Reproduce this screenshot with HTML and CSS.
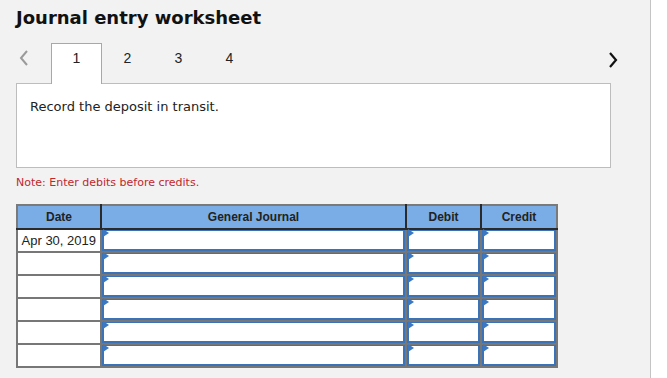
FILE: index.html
```html
<!DOCTYPE html>
<html lang="en">
<head>
    <meta charset="UTF-8">
    <meta name="viewport" content="width=device-width, initial-scale=1.0">
    <title>Journal entry worksheet</title>
    <link rel="stylesheet" href="styles.css">
</head>
<body>
    <div class="panel">
        <h1>Journal entry worksheet</h1>

        <div class="tabs">
            <div class="nav prev">
                <svg width="10" height="16" viewBox="0 0 10 16"><polyline points="8,1 2,8 8,15" fill="none" stroke="#9a9a9a" stroke-width="2"/></svg>
            </div>
            <div class="tab active">1</div>
            <div class="tab">2</div>
            <div class="tab">3</div>
            <div class="tab">4</div>
            <div class="spacer"></div>
            <div class="nav next">
                <svg width="10" height="16" viewBox="0 0 10 16"><polyline points="2,1 8,8 2,15" fill="none" stroke="#111" stroke-width="2.2"/></svg>
            </div>
        </div>

        <div class="question">
            <p>Record the deposit in transit.</p>
        </div>

        <p class="note">Note: Enter debits before credits.</p>

        <table class="journal">
            <colgroup>
                <col class="c-date">
                <col class="c-gj">
                <col class="c-debit">
                <col class="c-credit">
            </colgroup>
            <thead>
                <tr>
                    <th>Date</th>
                    <th>General Journal</th>
                    <th>Debit</th>
                    <th>Credit</th>
                </tr>
            </thead>
            <tbody>
                <tr>
                    <td class="date">Apr 30, 2019</td>
                    <td><div class="entry"></div></td>
                    <td><div class="entry"></div></td>
                    <td><div class="entry"></div></td>
                </tr>
                <tr>
                    <td class="date"></td>
                    <td><div class="entry"></div></td>
                    <td><div class="entry"></div></td>
                    <td><div class="entry"></div></td>
                </tr>
                <tr>
                    <td class="date"></td>
                    <td><div class="entry"></div></td>
                    <td><div class="entry"></div></td>
                    <td><div class="entry"></div></td>
                </tr>
                <tr>
                    <td class="date"></td>
                    <td><div class="entry"></div></td>
                    <td><div class="entry"></div></td>
                    <td><div class="entry"></div></td>
                </tr>
                <tr>
                    <td class="date"></td>
                    <td><div class="entry"></div></td>
                    <td><div class="entry"></div></td>
                    <td><div class="entry"></div></td>
                </tr>
                <tr>
                    <td class="date"></td>
                    <td><div class="entry"></div></td>
                    <td><div class="entry"></div></td>
                    <td><div class="entry"></div></td>
                </tr>
            </tbody>
        </table>
    </div>
</body>
</html>
```

FILE: styles.css
```css
html, body {
    margin: 0;
    padding: 0;
    background-color: white;
}
body {
    font-family: 'DejaVu Sans', Verdana, sans-serif;
    color: #222;
}
.panel {
    width: 651px;
    height: 378px;
    background-color: #f2f2f2;
    border-right: 1px solid #c4c4c4;
    padding: 0 0 0 16px;
    box-sizing: border-box;
    overflow: hidden;
}
h1 {
    margin: 0;
    padding-top: 6px;
    font-size: 18px;
    font-weight: bold;
    color: #111;
    line-height: 23px;
}
.tabs {
    display: flex;
    align-items: stretch;
    width: 604px;
    height: 40px;
    margin-top: 14px;
}
.nav {
    display: flex;
    align-items: center;
    padding-bottom: 10px;
}
.prev {
    width: 35px;
    padding-left: 3px;
    box-sizing: border-box;
}
.next {
    width: 12px;
    padding-bottom: 6px;
}
.spacer {
    flex: 1;
}
.tab {
    width: 51px;
    display: flex;
    align-items: center;
    justify-content: center;
    padding-bottom: 10px;
    box-sizing: border-box;
    font-family: 'Liberation Sans', Arial, sans-serif;
    font-size: 14px;
    color: #222;
}
.tab.active {
    width: 51px;
    background-color: white;
    border: 1px solid #a8a8a8;
    border-bottom: none;
    height: 41px;
    padding-bottom: 12px;
    position: relative;
    z-index: 1;
}
.question {
    width: 595px;
    height: 85px;
    box-sizing: border-box;
    background-color: white;
    border: 1px solid #bdbdbd;
    padding: 14px 13px;
}
.question p {
    margin: 0;
    font-size: 13px;
    line-height: 17px;
    color: #222;
}
.note {
    margin: 7px 0 0 0;
    font-size: 11px;
    line-height: 15px;
    color: #c0272d;
}
.journal {
    margin-top: 14px;
    border-collapse: collapse;
    table-layout: fixed;
    width: 541px;
    border: 2px solid #7a7a7a;
    font-family: 'Liberation Sans', Arial, sans-serif;
}
.c-date { width: 84px; }
.c-gj { width: 305px; }
.c-debit { width: 75px; }
.c-credit { width: 76px; }
.journal th {
    height: 22px;
    padding: 0;
    background-color: #7aade5;
    border-left: 2px solid #2a2a2a;
    border-bottom: 2px solid #2a2a2a;
    font-size: 12px;
    font-weight: bold;
    color: #222;
    text-align: center;
}
.journal th:first-child {
    border-left: none;
}
.journal td {
    height: 21px;
    padding: 0;
    background-color: white;
    border: 2px solid #777;
}
.journal td.date {
    font-size: 13px;
    text-align: right;
    padding-right: 4px;
    color: #222;
}
.entry {
    position: relative;
    height: 21px;
    box-sizing: border-box;
    border: 2px solid #3b73b8;
    border-top-width: 1px;
}
.entry::before {
    content: "";
    position: absolute;
    top: -2px;
    left: -1px;
    border-left: 6px solid #3b78c4;
    border-top: 4px solid transparent;
    border-bottom: 4px solid transparent;
}
```
